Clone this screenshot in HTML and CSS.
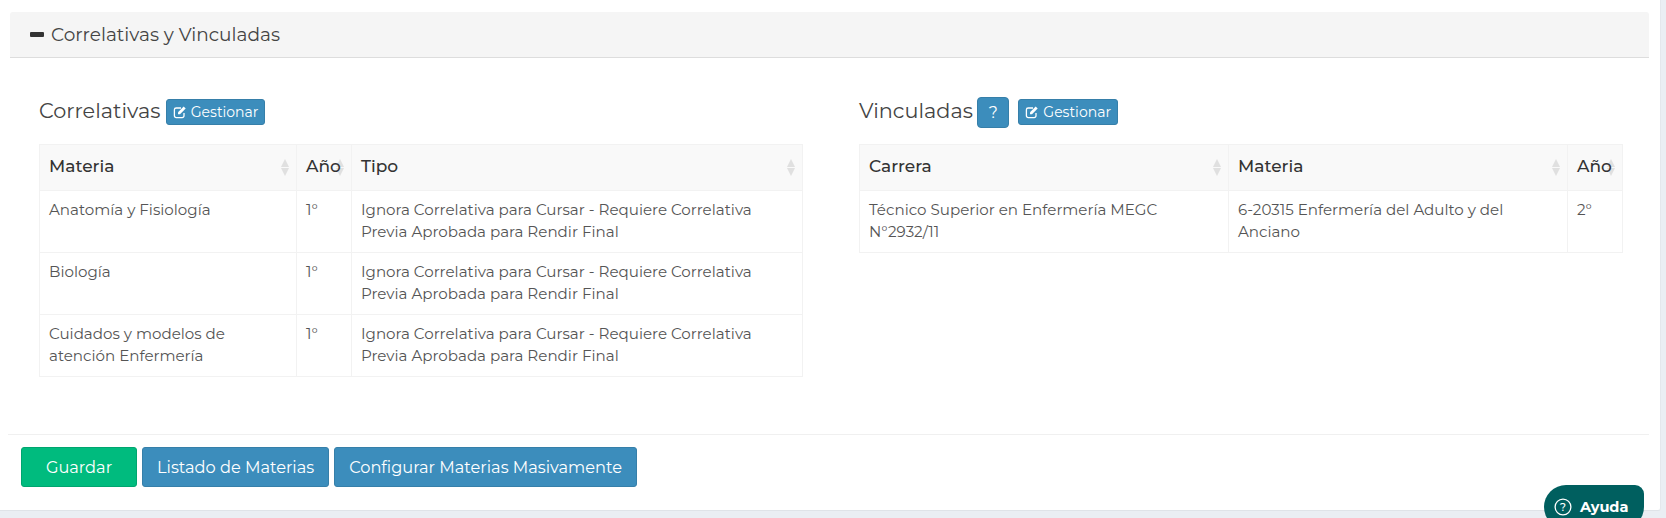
FILE: index.html
```html
<!DOCTYPE html>
<html lang="es">
<head>
    <meta charset="UTF-8">
    <title>Correlativas y Vinculadas</title>
    <link rel="stylesheet" href="styles.css">
</head>
<body>
    <div class="page">
        <div class="panel-heading"><span class="minus"></span>Correlativas y Vinculadas</div>
        <div class="panel-body">
            <section class="col-left">
                <h3><span class="h-text">Correlativas </span><a class="btn-xs"><svg class="edit" viewBox="0 0 14 14"><path d="M11 8v2.800a1.800 1.800 0 0 1-1.800 1.800H3.200a1.800 1.800 0 0 1-1.800-1.800V4.800A1.800 1.800 0 0 1 3.200 3H8" fill="none" stroke="#fff" stroke-width="1.300"/><path d="M5 7.300 10.700 1.600l2 2L7 9.300H5z" fill="#fff"/></svg>Gestionar</a></h3>
                <table>
                    <thead>
                        <tr><th class="c1">Materia<span class="sort"></span></th><th class="c2">Año<span class="sort"></span></th><th>Tipo<span class="sort"></span></th></tr>
                    </thead>
                    <tbody>
                        <tr><td>Anatomía y Fisiología</td><td>1°</td><td>Ignora Correlativa para Cursar - Requiere Correlativa Previa Aprobada para Rendir Final</td></tr>
                        <tr><td>Biología</td><td>1°</td><td>Ignora Correlativa para Cursar - Requiere Correlativa Previa Aprobada para Rendir Final</td></tr>
                        <tr><td>Cuidados y modelos de atención Enfermería</td><td>1°</td><td>Ignora Correlativa para Cursar - Requiere Correlativa Previa Aprobada para Rendir Final</td></tr>
                    </tbody>
                </table>
            </section>
            <section class="col-right">
                <h3><span class="h-text">Vinculadas </span><a class="btn-help">?</a><a class="btn-xs"><svg class="edit" viewBox="0 0 14 14"><path d="M11 8v2.800a1.800 1.800 0 0 1-1.800 1.800H3.200a1.800 1.800 0 0 1-1.800-1.800V4.800A1.800 1.800 0 0 1 3.200 3H8" fill="none" stroke="#fff" stroke-width="1.300"/><path d="M5 7.300 10.700 1.600l2 2L7 9.300H5z" fill="#fff"/></svg>Gestionar</a></h3>
                <table>
                    <thead>
                        <tr><th class="v1">Carrera<span class="sort"></span></th><th class="v2">Materia<span class="sort"></span></th><th>Año<span class="sort"></span></th></tr>
                    </thead>
                    <tbody>
                        <tr><td>Técnico Superior en Enfermería MEGC N°2932/11</td><td>6-20315 Enfermería del Adulto y del Anciano</td><td>2°</td></tr>
                    </tbody>
                </table>
            </section>
        </div>
        <div class="actions">
            <a class="btn btn-green">Guardar</a>
            <a class="btn btn-blue">Listado de Materias</a>
            <a class="btn btn-blue">Configurar Materias Masivamente</a>
        </div>
    </div>
    <a class="ayuda"><svg viewBox="0 0 18 18"><circle cx="9" cy="9" r="7.900" fill="none" stroke="#fff" stroke-width="1.300"/><text x="9" y="13" text-anchor="middle" class="ayuda-q">?</text></svg>Ayuda</a>
</body>
</html>
```

FILE: styles.css
```css
* {
    box-sizing: border-box;
}

html, body {
    margin: 0;
    height: 518px;
    overflow: hidden;
}

body {
    background: #eaeef3;
    font-family: Montserrat, "Open Sans", sans-serif;
    color: #555;
    font-size: 15px;
}

.page {
    background: #fff;
    width: 1661px;
    height: 511px;
    padding: 12px 11px 0 10px;
    border-bottom: 1px solid #dfe3e8;
    border-right: 1px solid #e4e7ec;
    border-bottom-right-radius: 3px;
}

.panel-heading {
    height: 46px;
    background: #f5f5f5;
    border-bottom: 1px solid #ddd;
    border-radius: 3px 3px 0 0;
    display: flex;
    align-items: center;
    font-size: 18.500px;
    color: #444;
    padding-left: 20px;
}

.minus {
    width: 14px;
    height: 5px;
    background: #333;
    border-radius: 1px;
    margin-right: 7px;
}

.panel-body {
    display: flex;
    height: 377px;
    padding: 38px 26px 0 31px;
    margin-left: -2px;
    border-bottom: 1px solid #f0f0f0;
}

.col-left {
    width: 764px;
    margin-right: 56px;
}

.col-right {
    flex: 1;
}

h3 {
    margin: 0 0 16px;
    font-size: 20.800px;
    font-weight: 400;
    height: 32px;
    display: flex;
    align-items: center;
    color: #444;
    white-space: pre;
}

.h-text {
    margin-bottom: 3px;
}

.btn-xs {
    background: #3c8dbc;
    border: 1px solid #367fa9;
    border-radius: 3px;
    color: #fff;
    font-size: 14px;
    height: 26px;
    padding: 0 6px;
    display: inline-flex;
    align-items: center;
    gap: 4px;
}

.edit {
    width: 14px;
    height: 14px;
}

.btn-help {
    background: #3c8dbc;
    border: 1px solid #367fa9;
    border-radius: 4px;
    color: #fff;
    font-size: 16px;
    width: 32px;
    height: 31px;
    margin-left: -1px;
    display: inline-flex;
    align-items: center;
    justify-content: center;
    margin-right: 9px;
}

table {
    width: 100%;
    border-collapse: collapse;
    table-layout: fixed;
    font-size: 15.100px;
    line-height: 22px;
}

th, td {
    border: 1px solid #f2f2f2;
    text-align: left;
    vertical-align: top;
    padding: 8px 9px 9px;
}

td {
    height: 62px;
}

th {
    background: #f9f9f9;
    color: #333;
    font-size: 17px;
    font-weight: 500;
    height: 46px;
    padding: 10px 9px 11px;
    position: relative;
    isolation: isolate;
}

/* va detras del texto, "Año" se pisa con las flechas */
.sort {
    position: absolute;
    z-index: -1;
    right: 7px;
    top: 14px;
    width: 0;
    height: 0;
    border-left: 4.500px solid transparent;
    border-right: 4.500px solid transparent;
    border-bottom: 8px solid #e0e0e0;
}

.sort::after {
    content: "";
    position: absolute;
    left: -4.500px;
    top: 9px;
    border-left: 4.500px solid transparent;
    border-right: 4.500px solid transparent;
    border-top: 8px solid #e0e0e0;
}

.c1 {
    width: 257px;
}

.c2 {
    width: 55px;
}

.v1 {
    width: 369px;
}

.v2 {
    width: 339px;
}

.actions {
    display: flex;
    gap: 5px;
    padding: 12px 0 0 11px;
}

.btn {
    height: 40px;
    border-radius: 3px;
    color: #fff;
    font-size: 16.200px;
    display: flex;
    align-items: center;
    justify-content: center;
    padding: 0 14px;
    border: 1px solid #367fa9;
}

.btn-blue {
    background: #3c8dbc;
}

.btn-green {
    background: #00bb7e;
    border-color: #00a56f;
    width: 116px;
}

.ayuda {
    position: fixed;
    right: 22px;
    top: 485px;
    width: 100px;
    height: 44px;
    background: #005f5f;
    border-radius: 22px 9px 22px 22px;
    color: #fff;
    font-weight: 700;
    font-size: 14.500px;
    display: flex;
    align-items: flex-start;
    padding: 13px 0 0 10px;
    gap: 8px;
}

.ayuda svg {
    width: 18px;
    height: 18px;
}

.ayuda-q {
    fill: #fff;
    font-size: 11px;
    font-weight: 500;
}
```
